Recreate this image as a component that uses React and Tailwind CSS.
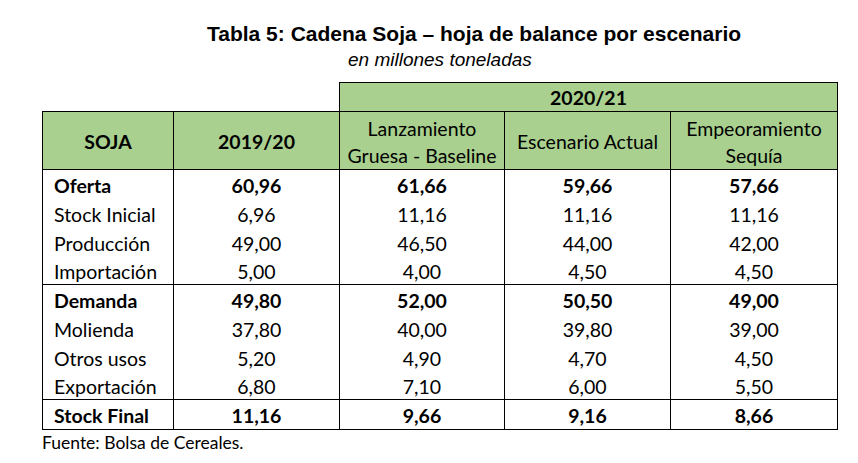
import React from 'react';

const groups = [
  {
    head: ['Oferta', '60,96', '61,66', '59,66', '57,66'],
    rows: [
      ['Stock Inicial', '6,96', '11,16', '11,16', '11,16'],
      ['Producción', '49,00', '46,50', '44,00', '42,00'],
      ['Importación', '5,00', '4,00', '4,50', '4,50'],
    ],
  },
  {
    head: ['Demanda', '49,80', '52,00', '50,50', '49,00'],
    rows: [
      ['Molienda', '37,80', '40,00', '39,80', '39,00'],
      ['Otros usos', '5,20', '4,90', '4,70', '4,50'],
      ['Exportación', '6,80', '7,10', '6,00', '5,50'],
    ],
  },
];

const Row = ({ cells, bold, top, bottom, h }) => (
  <tr className={h}>
    {cells.map((c, i) => (
      <td
        key={i}
        className={`border-x border-black p-0 pt-[3px] leading-none ${top ? 'border-t' : ''} ${bottom ? 'border-b' : ''} ${bold ? 'font-bold' : ''} ${i === 0 ? 'text-left pl-[11px]' : 'text-center'}`}
      >
        {c}
      </td>
    ))}
  </tr>
);

export default function App() {
  return (
    <div className="w-[858px] h-[463px] bg-white text-black overflow-hidden">
      {/* Title */}
      <div className="pt-[22px] font-['Liberation_Sans',Arial,sans-serif]">
        <h1 className="pl-[207px] text-[21px] font-bold leading-[24px]">
          Tabla 5: Cadena Soja – hoja de balance por escenario
        </h1>
        <p className="pl-[348px] mt-[3px] text-[19px] italic leading-[22px]">en millones toneladas</p>
      </div>

      {/* Table */}
      <div className="pl-[42px] pt-[11px] font-['Lato','Noto_Sans',sans-serif] text-[19.5px]">
        <table className="border-collapse table-fixed w-[795px]">
          <colgroup>
            <col className="w-[131px]" />
            <col className="w-[166px]" />
            <col className="w-[165px]" />
            <col className="w-[166px]" />
            <col className="w-[167px]" />
          </colgroup>
          <thead>
            <tr className="h-[29px]">
              <th colSpan={2} className="p-0"></th>
              <th colSpan={3} className="border border-black bg-[#a9d08e] p-0 pt-[2px] font-bold leading-none">
                2020/21
              </th>
            </tr>
            <tr className="h-[58px] bg-[#a9d08e]">
              <th className="border border-black p-0 pt-[2px] font-bold">SOJA</th>
              <th className="border border-black p-0 pt-[2px] font-bold">2019/20</th>
              <th className="border border-black p-0 pt-[2px] font-normal leading-[27px]">
                Lanzamiento<br />Gruesa - Baseline
              </th>
              <th className="border border-black p-0 pt-[2px] font-normal">Escenario Actual</th>
              <th className="border border-black p-0 pt-[2px] font-normal leading-[27px]">
                Empeoramiento<br />Sequía
              </th>
            </tr>
          </thead>
          <tbody>
            {groups.map((g, gi) => (
              <React.Fragment key={gi}>
                <Row cells={g.head} bold top h="h-[29px]" />
                <Row cells={g.rows[0]} h="h-[29px]" />
                <Row cells={g.rows[1]} h="h-[29px]" />
                <Row cells={g.rows[2]} bottom h="h-[28px]" />
              </React.Fragment>
            ))}
            <Row cells={['Stock Final', '11,16', '9,66', '9,16', '8,66']} bold top bottom h="h-[30px]" />
          </tbody>
        </table>
        <p className="text-[17.5px] leading-[26px]">Fuente: Bolsa de Cereales.</p>
      </div>
    </div>
  );
}
